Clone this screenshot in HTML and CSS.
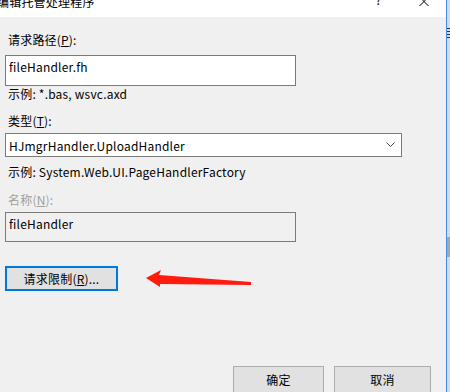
FILE: index.html
```html
<!DOCTYPE html>
<html lang="zh-CN">
<head>
    <meta charset="UTF-8">
    <title>编辑托管处理程序</title>
    <link rel="stylesheet" href="styles.css">
</head>
<body>
    <div class="screen">
        <div class="dialog">
            <!-- Title bar -->
            <div class="titlebar">
                <span class="title">编辑托管处理程序</span>
                <span class="help">?</span>
                <svg class="close" width="10" height="10" viewBox="0 0 10 10">
                    <path d="M0.5 -3 L9.5 6 M9.5 -3 L0.5 6" stroke="#000" stroke-width="1" fill="none"/>
                </svg>
            </div>

            <div class="content">
                <label class="label">请求路径(<u>P</u>):</label>
                <div class="field">fileHandler.fh</div>
                <div class="hint">示例: *.bas, wsvc.axd</div>

                <label class="label label-type">类型(<u>T</u>):</label>
                <div class="select">
                    <span>HJmgrHandler.UploadHandler</span>
                    <svg class="chevron" width="9" height="6" viewBox="0 0 9 6">
                        <path d="M0.5 0.5 L4.5 4.5 L8.5 0.5" stroke="#444" stroke-width="1" fill="none"/>
                    </svg>
                </div>
                <div class="hint hint-type">示例: System.Web.UI.PageHandlerFactory</div>

                <label class="label label-name disabled">名称(<u>N</u>):</label>
                <div class="field field-disabled">fileHandler</div>

                <div class="limit-row">
                    <button class="btn btn-focus">请求限制(<u>R</u>)...</button>
                    <!-- annotation arrow -->
                    <svg class="arrow" width="114" height="26" viewBox="0 0 114 26">
                        <polygon points="6,13 21,5 19,10 111,17 111,20 20,19 20,22" fill="#ff1c0e"/>
                    </svg>
                </div>

                <div class="actions">
                    <button class="btn btn-ok">确定</button>
                    <button class="btn btn-cancel">取消</button>
                </div>
            </div>
        </div>
        <div class="edge"></div>
        <div class="strip">
            <div class="strip-marks"></div>
            <div class="strip-thumb"></div>
        </div>
    </div>
</body>
</html>
```

FILE: styles.css
```css
html, body {
    margin: 0;
    padding: 0;
}
body {
    font-family: "Noto Sans CJK SC", "Noto Sans", sans-serif;
    font-size: 12px;
    letter-spacing: 0.2px;
    color: #000;
    background-color: #f0f0f0;
    overflow: hidden;
}
u {
    text-decoration: underline;
    text-underline-offset: 1px;
}
.screen {
    display: flex;
    width: 450px;
    height: 392px;
}
.dialog {
    width: 446px;
    height: 392px;
    background-color: #f0f0f0;
    overflow: hidden;
}
.titlebar {
    display: flex;
    align-items: flex-start;
    height: 17px;
    background-color: #fff;
    overflow: hidden;
}
.title {
    display: block;
    margin-left: -3px;
    margin-top: -6px;
    line-height: 16px;
    font-size: 12px;
    white-space: nowrap;
}
.help {
    margin-left: 281px;
    margin-top: -8px;
    line-height: 16px;
    font-size: 12px;
}
.close {
    margin-left: 37px;
}
.content {
    padding: 15px 0 0 5px;
}
.label {
    display: block;
    padding-left: 3px;
    line-height: 16px;
}
.disabled {
    color: #a0a0a0;
}
.field {
    box-sizing: border-box;
    width: 291px;
    height: 31px;
    margin-top: 7px;
    padding: 3px 3px;
    line-height: 16px;
    background-color: #fff;
    border: 1px solid #7a7a7a;
}
.field-disabled {
    margin-top: 4px;
    height: 30px;
    background-color: #f0f0f0;
}
.hint {
    padding-left: 3px;
    line-height: 16px;
    margin-top: 0;
}
.label-type {
    margin-top: 11px;
}
.select {
    box-sizing: border-box;
    display: flex;
    align-items: center;
    justify-content: space-between;
    width: 397px;
    height: 24px;
    margin-top: 4px;
    padding: 0 6px 0 3px;
    background-color: #fff;
    border: 1px solid #7a7a7a;
}
.chevron {
    display: block;
}
.hint-type {
    margin-top: 7px;
}
.label-name {
    margin-top: 12px;
}
.limit-row {
    display: flex;
    align-items: flex-start;
    margin-top: 24px;
}
.btn {
    box-sizing: border-box;
    font-family: inherit;
    font-size: 12px;
    letter-spacing: 0.2px;
    color: #000;
    background-color: #e1e1e1;
    border: 1px solid #adadad;
    border-radius: 0;
    padding: 0;
    line-height: 16px;
}
.btn-focus {
    width: 113px;
    height: 25px;
    border: 2px solid #0078d7;
}
.arrow {
    display: block;
    margin-left: 22px;
    margin-top: -1px;
}
.actions {
    display: flex;
    margin-top: 75px;
    margin-left: 228px;
    gap: 10px;
}
.btn-ok {
    width: 91px;
    height: 27px;
}
.btn-cancel {
    width: 97px;
    height: 27px;
}
.edge {
    width: 1px;
    height: 392px;
    background-color: #3d8ee8;
}
.strip {
    width: 3px;
    height: 392px;
    background-color: #dadada;
}
.strip-marks {
    height: 12px;
    margin-top: 28px;
    background: repeating-linear-gradient(#333 0 1px, #dadada 1px 3px);
}
.strip-thumb {
    height: 20px;
    margin-top: 197px;
    background-color: #a8a8a8;
}
```
